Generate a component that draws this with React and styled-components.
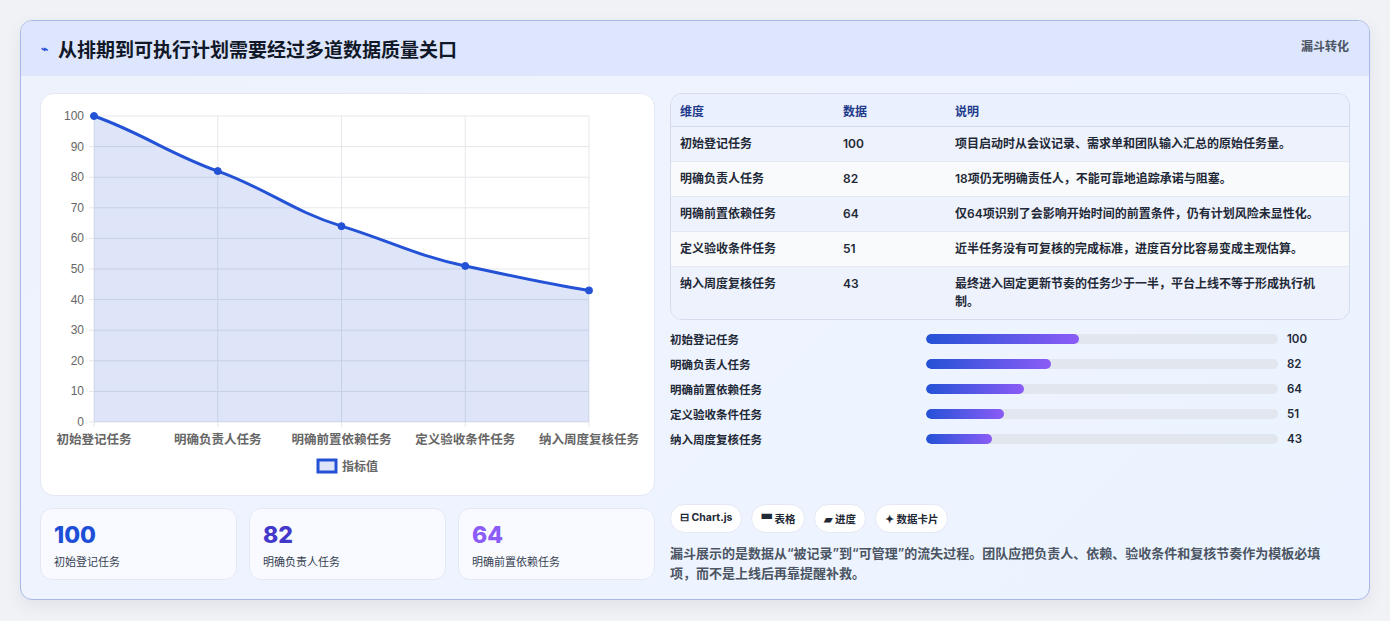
import React from 'react';
import styled, { createGlobalStyle } from 'styled-components';

const Global = createGlobalStyle`
  body { margin: 0; background: #f1f2f5; font-family: Inter, "Noto Sans CJK SC", sans-serif; }
`;

const Page = styled.div`
  padding: 20px;
`;

const Card = styled.div`
  height: 580px;
  box-sizing: border-box;
  border: 1px solid #a9b8e6;
  border-radius: 12px;
  background: linear-gradient(135deg, #eef2fd 0%, #eef4ff 60%, #eaf3ff 100%);
  overflow: hidden;
  box-shadow: 0 6px 16px rgba(30, 50, 120, 0.08);
`;

const Header = styled.div`
  height: 55px;
  background: #dde6fd;
  display: flex;
  align-items: center;
  padding: 0 20px;
  position: relative;
`;

const Title = styled.h1`
  margin: 0;
  font-size: 19px;
  font-weight: 700;
  color: #111827;
  display: flex;
  align-items: center;
  gap: 10px;
`;

const Tag = styled.span`
  position: absolute;
  right: 20px;
  top: 16px;
  font-size: 12px;
  font-weight: 700;
  color: #4b5563;
`;

const Body = styled.div`
  display: grid;
  grid-template-columns: 615px 680px;
  gap: 15px;
  padding: 17px 19px 0 19px;
`;

const Col = styled.div`
  display: flex;
  flex-direction: column;
`;

const ChartCard = styled.div`
  height: 403px;
  box-sizing: border-box;
  background: #fff;
  border: 1px solid #e3e8f4;
  border-radius: 14px;
`;

const Stats = styled.div`
  display: grid;
  grid-template-columns: repeat(3, 1fr);
  gap: 12px;
  margin-top: 12px;
`;

const Stat = styled.div`
  height: 72px;
  box-sizing: border-box;
  background: #f8faff;
  border: 1px solid #e3e8f4;
  border-radius: 12px;
  padding: 12px 13px;
`;

const StatNum = styled.div`
  font-size: 23px;
  font-weight: 800;
  color: ${(p) => p.color};
  line-height: 28px;
`;

const StatLabel = styled.div`
  font-size: 11px;
  color: #374151;
  margin-top: 4px;
`;

const Table = styled.table`
  width: 100%;
  border-collapse: separate;
  border-spacing: 0;
  border: 1px solid #d3dbec;
  border-radius: 12px;
  overflow: hidden;
  font-size: 12px;
  color: #1f2937;
`;

const Th = styled.th`
  text-align: left;
  font-weight: 700;
  color: #1e3a8a;
  background: #eaf0fd;
  height: 32px;
  padding: 0 9px;
  border-bottom: 1px solid #d3dbec;
  width: ${(p) => p.w || 'auto'};
`;

const Tr = styled.tr`
  background: ${(p) => (p.odd ? '#f8fafc' : '#eef2fc')};
`;

const Td = styled.td`
  padding: 8px 9px;
  vertical-align: top;
  line-height: 18px;
  font-weight: 600;
  padding-right: ${(p) => (p.wide ? '22px' : '9px')};
  border-bottom: ${(p) => (p.last ? 'none' : '1px solid #e3e8f2')};
`;

const Bars = styled.div`
  display: flex;
  flex-direction: column;
  gap: 7px;
  margin-top: 10px;
`;

const BarRow = styled.div`
  display: grid;
  grid-template-columns: 256px 361px 1fr;
  align-items: center;
  font-size: 11.5px;
  font-weight: 600;
  color: #1f2937;
  height: 18px;
`;

const Track = styled.div`
  height: 10px;
  background: #e2e6ef;
  border-radius: 5px;
  margin-right: 9px;
  overflow: hidden;
`;

const Fill = styled.div`
  height: 100%;
  border-radius: 5px;
  background: linear-gradient(90deg, #2452d6, #8b5cf6);
`;

const Chips = styled.div`
  display: flex;
  gap: 9px;
  margin-top: 56px;
`;

const Chip = styled.span`
  background: #fff;
  border: 1px solid #e3e8f4;
  border-radius: 15px;
  padding: 6px 9px;
  font-size: 10.5px;
  font-weight: 700;
  color: #1f2937;
`;

const Note = styled.p`
  margin: 10px 0 0;
  font-size: 13px;
  line-height: 20px;
  color: #4b5563;
  font-weight: 600;
  padding-right: 8px;
`;

const rows = [
  ['初始登记任务', 100, '项目启动时从会议记录、需求单和团队输入汇总的原始任务量。'],
  ['明确负责人任务', 82, '18项仍无明确责任人，不能可靠地追踪承诺与阻塞。'],
  ['明确前置依赖任务', 64, '仅64项识别了会影响开始时间的前置条件，仍有计划风险未显性化。'],
  ['定义验收条件任务', 51, '近半任务没有可复核的完成标准，进度百分比容易变成主观估算。'],
  ['纳入周度复核任务', 43, '最终进入固定更新节奏的任务少于一半，平台上线不等于形成执行机制。'],
];

const Chart = () => {
  const x0 = 53, x1 = 548, yTop = 22, yBot = 328;
  const xs = rows.map((_, i) => x0 + ((x1 - x0) * i) / 4);
  const y = (v) => yBot - ((yBot - yTop) * v) / 100;
  const pts = rows.map((r, i) => [xs[i], y(r[1])]);
  let d = `M${pts[0][0]},${pts[0][1]}`;
  for (let i = 1; i < pts.length; i++) {
    const [ax, ay] = pts[i - 1];
    const [bx, by] = pts[i];
    const dx = (bx - ax) * 0.4;
    const p0 = pts[i - 2] || pts[i - 1];
    const p3 = pts[i + 1] || pts[i];
    const s1 = (by - p0[1]) / (bx - p0[0]);
    const s2 = (p3[1] - ay) / (p3[0] - ax);
    d += ` C${ax + dx},${ay + s1 * dx * 0.8} ${bx - dx},${by - s2 * dx * 0.8} ${bx},${by}`;
  }
  return (
    <svg width="615" height="403" style={{ fontFamily: '"Liberation Sans", "Noto Sans CJK SC", sans-serif' }}>
      {Array.from({ length: 11 }, (_, i) => (
        <g key={i}>
          <line x1={x0 - 5} x2={x1} y1={y(i * 10)} y2={y(i * 10)} stroke="#e5e7eb" />
          <text x={x0 - 10} y={y(i * 10) + 4} fontSize="12" fill="#666" textAnchor="end">{i * 10}</text>
        </g>
      ))}
      {xs.map((x, i) => (
        <g key={i}>
          <line x1={x} x2={x} y1={yTop} y2={yBot + 5} stroke="#e5e7eb" />
          <text x={x} y={yBot + 22} fontSize="12.5" fill="#666" textAnchor="middle" fontWeight="600" fontFamily='"Noto Sans CJK SC", sans-serif'>{rows[i][0]}</text>
        </g>
      ))}
      <path d={`${d} L${x1},${yBot} L${x0},${yBot} Z`} fill="rgba(36,82,214,0.15)" />
      <path d={d} fill="none" stroke="#2452d6" strokeWidth="3" />
      {pts.map(([px, py], i) => (
        <circle key={i} cx={px} cy={py} r="3.5" fill="#2452d6" stroke="#2452d6" />
      ))}
      <rect x="277" y="366" width="18" height="12" fill="rgba(36,82,214,0.15)" stroke="#2452d6" strokeWidth="3" />
      <text x="301" y="377" fontSize="12" fill="#666" fontWeight="600" fontFamily='"Noto Sans CJK SC", sans-serif'>指标值</text>
    </svg>
  );
};

export default function App() {
  return (
    <Page>
      <Global />
      <Card>
        <Header>
          <Title><span style={{ fontSize: 12, color: '#2452d6' }}>⌁</span>从排期到可执行计划需要经过多道数据质量关口</Title>
          <Tag>漏斗转化</Tag>
        </Header>
        <Body>
          <Col>
            <ChartCard><Chart /></ChartCard>
            <Stats>
              <Stat><StatNum color="#1d4ed8">100</StatNum><StatLabel>初始登记任务</StatLabel></Stat>
              <Stat><StatNum color="#4338ca">82</StatNum><StatLabel>明确负责人任务</StatLabel></Stat>
              <Stat><StatNum color="#8b5cf6">64</StatNum><StatLabel>明确前置依赖任务</StatLabel></Stat>
            </Stats>
          </Col>
          <Col>
            <Table>
              <thead>
                <tr><Th w="145px">维度</Th><Th w="94px">数据</Th><Th>说明</Th></tr>
              </thead>
              <tbody>
                {rows.map((r, i) => (
                  <Tr key={r[0]} odd={i % 2 === 1}>
                    <Td last={i === 4}>{r[0]}</Td>
                    <Td last={i === 4}>{r[1]}</Td>
                    <Td last={i === 4} wide>{r[2]}</Td>
                  </Tr>
                ))}
              </tbody>
            </Table>
            <Bars>
              {rows.map((r) => (
                <BarRow key={r[0]}>
                  <span>{r[0]}</span>
                  <Track><Fill style={{ width: `${r[1] * 1.53}px` }} /></Track>
                  <span>{r[1]}</span>
                </BarRow>
              ))}
            </Bars>
            <Chips>
              <Chip>⊟ Chart.js</Chip>
              <Chip>▀ 表格</Chip>
              <Chip>▰ 进度</Chip>
              <Chip>✦ 数据卡片</Chip>
            </Chips>
            <Note>漏斗展示的是数据从“被记录”到“可管理”的流失过程。团队应把负责人、依赖、验收条件和复核节奏作为模板必填项，而不是上线后再靠提醒补救。</Note>
          </Col>
        </Body>
      </Card>
    </Page>
  );
}
